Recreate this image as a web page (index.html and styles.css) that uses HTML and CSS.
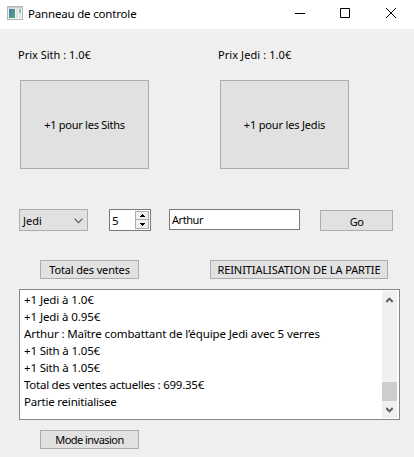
FILE: index.html
```
<!DOCTYPE html>
<html lang="fr">
<head>
<meta charset="utf-8">
<title>Panneau de controle</title>
<link rel="stylesheet" href="styles.css">
</head>
<body>
<header class="titlebar">
  <svg class="app-icon" width="16" height="14" viewBox="0 0 16 14">
    <defs><linearGradient id="pane" x1="0" y1="0" x2="1" y2="1"><stop offset="0" stop-color="#4676a8"/><stop offset="1" stop-color="#55b07c"/></linearGradient></defs>
    <rect x=".5" y=".5" width="15" height="13" fill="#f4f4f4" stroke="#b4b7ba"/>
    <rect x="1" y="1" width="14" height="1.5" fill="#c9cccf"/>
    <rect x="2" y="3" width="6" height="9" fill="url(#pane)"/>
    <rect x="9" y="3" width="2" height="9" fill="#e2e2e2"/>
    <rect x="12" y="3" width="2" height="4" fill="#8fc0a0"/>
    <rect x="12" y="7" width="2" height="5" fill="#e4e8e4"/>
  </svg>
  <h1 class="title">Panneau de controle</h1>
  <svg class="controls" width="102" height="10" viewBox="0 0 102 10" fill="none" stroke="#000">
    <path d="M0 5.5h10M45.5.5h9v9h-9zM91 0l10 10M101 0L91 10"/>
  </svg>
</header>
<main class="panel">
  <div class="prices">
    <span class="t-sith-price">Prix Sith : 1.0€</span>
    <span class="t-jedi-price">Prix Jedi : 1.0€</span>
  </div>
  <div class="teams">
    <button class="btn big"><span class="t-sith">+1 pour les Siths</span></button>
    <button class="btn big"><span class="t-jedi">+1 pour les Jedis</span></button>
  </div>
  <div class="order">
    <div class="btn combo"><span>Jedi</span>
      <svg width="9" height="6" viewBox="0 0 9 6" fill="none" stroke="#555" stroke-width="1.1"><path d="M.5.7l4 4 4-4"/></svg>
    </div>
    <div class="field spin"><span>5</span>
      <div class="steps">
        <i class="step"><svg width="5" height="3" viewBox="0 0 5 3"><path d="M2 0h1v1h1v1h1v1H0V2h1V1h1z"/></svg></i>
        <i class="step"><svg width="5" height="3" viewBox="0 0 5 3"><path d="M0 0h5v1H4v1H3v1H2V2H1V1H0z"/></svg></i>
      </div>
    </div>
    <div class="field name"><span class="t-name">Arthur</span></div>
    <button class="btn go"><span class="t-go">Go</span></button>
  </div>
  <div class="actions">
    <button class="btn small"><span class="t-total">Total des ventes</span></button>
    <button class="btn reset"><span class="t-reset">REINITIALISATION DE LA PARTIE</span></button>
  </div>
  <div class="log">
    <ul class="lines">
      <li class="l-jedi">+1 Jedi à 1.0€</li>
      <li class="l-jedi">+1 Jedi à 0.95€</li>
      <li class="l-join">Arthur : Maître combattant de l’équipe Jedi avec 5 verres</li>
      <li class="l-sith">+1 Sith à 1.05€</li>
      <li class="l-sith">+1 Sith à 1.05€</li>
      <li class="l-sum">Total des ventes actuelles : 699.35€</li>
      <li class="l-reset">Partie reinitialisee</li>
    </ul>
    <div class="scrollbar">
      <svg width="7" height="6" viewBox="0 0 7 6" fill="none" stroke="#606060" stroke-width="2"><path d="M.3 5l3.2-3.4L6.7 5"/></svg>
      <div class="thumb"></div>
      <svg width="7" height="6" viewBox="0 0 7 6" fill="none" stroke="#606060" stroke-width="2"><path d="M.3 1l3.2 3.4L6.7 1"/></svg>
    </div>
  </div>
  <button class="btn small mode"><span class="t-mode">Mode invasion</span></button>
</main>
</body>
</html>
```
FILE: styles.css
```
* { box-sizing: border-box; }
body {
  margin: 0;
  height: 457px;
  background: #efefef;
  color: #000;
  font: 11px/15px "Noto Sans", sans-serif;
  overflow: hidden;
  white-space: nowrap;
}
.titlebar {
  display: flex;
  align-items: center;
  height: 29px;
  padding: 0 17px 3px 7px;
  background: #fff;
}
.title { margin: 0 0 0 5px; font-size: 11.5px; font-weight: 400; letter-spacing: -.18px; }
.controls { margin-left: auto; }

.panel { padding: 18px 14px 0 18px; }
.prices { display: grid; grid-template-columns: 200px auto; height: 33px; }
.btn {
  display: flex;
  align-items: center;
  justify-content: center;
  flex: none;
  padding: 0;
  border: 1px solid #adadad;
  border-radius: 0;
  background: #e1e1e1;
  color: #000;
  font: inherit;
}
.teams { display: flex; gap: 71px; padding-left: 2px; }
.big { width: 129px; height: 89px; padding-bottom: 1px; }

.order { display: flex; align-items: flex-start; margin: 40px 0 0 1px; height: 22px; }
.combo { width: 69px; height: 22px; padding: 1px 4px 0 3px; justify-content: space-between; }
.field { display: flex; align-items: center; border: 1px solid #7a7a7a; background: #fff; padding-left: 2px; }
.spin { width: 42px; height: 22px; margin-left: 21px; padding: 1px; }
.spin span { flex: 1; padding: 1px 0 0 1px; font-size: 11.5px; }
.steps { display: flex; flex-direction: column; width: 14px; height: 18px; }
.step { display: flex; align-items: center; justify-content: center; height: 9px; border: 1px solid #acacac; background: #f0f0f0; }
.step + .step { height: 10px; margin-top: -1px; }
.name { width: 131px; height: 21px; margin-left: 18px; }
.go { width: 73px; height: 21px; margin: 1px 0 0 20px; padding-top: 1px; }

.actions { display: flex; gap: 71px; margin: 29px 0 0 22px; }
.small { width: 99px; height: 19px; }
.reset { width: 178px; height: 19px; }

.log {
  display: flex;
  justify-content: space-between;
  width: 381px;
  height: 131px;
  margin: 10px 0 0 1px;
  padding: 1px 2px 1px 4px;
  border: 1px solid #828790;
  background: #fff;
}
.lines { margin: 0; padding: 0; list-style: none; font-size: 11.5px; line-height: 17px; }
.scrollbar { display: flex; flex-direction: column; align-items: center; width: 15px; padding: 6px 0 5px; background: #f0f0f0; }
.thumb { width: 15px; height: 19px; margin: auto 0 6px; background: #cdcdcd; }
.mode { margin: 10px 0 0 22px; }

.t-jedi-price { letter-spacing: .08px; }
.t-sith { letter-spacing: -.27px; }
.t-jedi { letter-spacing: -.17px; }
.t-name { letter-spacing: -.45px; }
.t-go { letter-spacing: -.5px; }
.t-total { letter-spacing: -.15px; }
.t-reset { letter-spacing: -.09px; }
.t-mode { letter-spacing: -.53px; }
.l-jedi { letter-spacing: -.09px; }
.l-join { letter-spacing: -.11px; }
.l-sith { letter-spacing: -.17px; }
.l-sum { letter-spacing: -.25px; }
.l-reset { letter-spacing: -.21px; }
```
